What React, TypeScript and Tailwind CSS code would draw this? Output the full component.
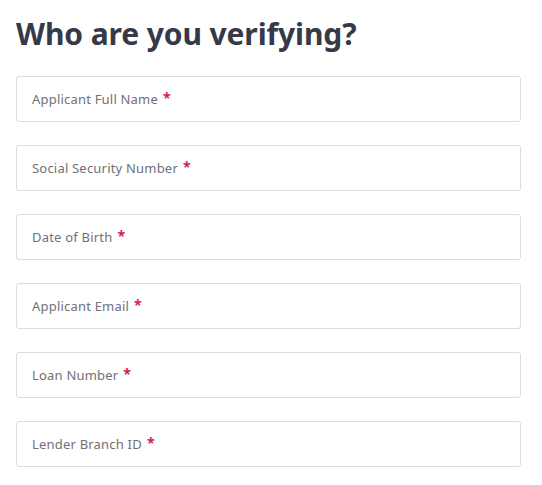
const fields = [
  "Applicant Full Name",
  "Social Security Number",
  "Date of Birth",
  "Applicant Email",
  "Loan Number",
  "Lender Branch ID",
];

export default function App() {
  return (
    <div
      className="min-h-[485px] w-[542px] bg-white px-4 pt-[14px]"
      style={{ fontFamily: '"Noto Sans", "Open Sans", sans-serif' }}
    >
      <h1 className="text-[30px] font-bold leading-[40px] text-[#363a48] tracking-[-0.1px]">
        Who are you verifying?
      </h1>
      <div className="mt-[22px] flex w-[505px] flex-col gap-[23px]">
        {fields.map((label) => (
          <div
            key={label}
            className="flex h-[46px] items-center rounded-[3px] border border-[#dcdcdc] bg-white pl-[15px] pt-[1px]"
          >
            <span className="text-[13px] tracking-[0.2px] text-[#6f7179]">{label}</span>
            <span className="ml-[5px] -mt-[4px] text-[14px] font-bold text-[#d81b4f]">*</span>
          </div>
        ))}
      </div>
    </div>
  );
}
